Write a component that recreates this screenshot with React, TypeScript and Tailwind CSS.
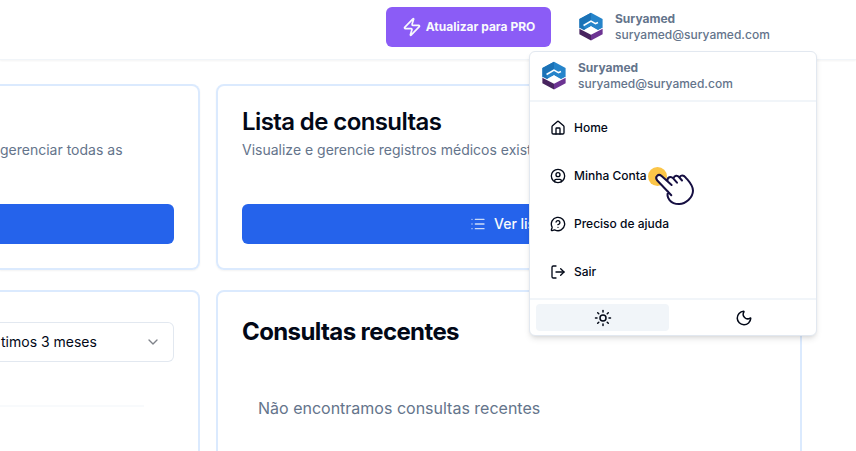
import React from "react";
import { Zap, House, LogOut, MessageCircleQuestionMark, Sun, Moon, List, ChevronDown } from "lucide-react";

function Logo() {
  return (
    <svg viewBox="0 0 26 30" className="h-[29px] w-[26px] shrink-0">
      <path d="M1 7.300 13 .8l12 6.500v9.200l-4.500 2.400L13 14.700 5 18.900l-4-2.200Z" fill="#2584ca" />
      <path d="M1 7.300 13 .8v7.200L5.500 12.500v3.300l2 1.900L5 18.900l-4-2.200Z" fill="#1b72b6" />
      <path d="m5.300 14 7.700-4.600 4.600 2.700 2.600-1.300" fill="none" stroke="#fff" strokeWidth="1.600" />
      <path d="m1 16.200 12 6.400 12-6.400v1.600l-12 6.400L1 17.800ZM13 14.700l6.500 4.200-6.500 3.900-6.500-3.900Z" fill="#fff" />
      <path d="M1 17.400 13 23.500v6L1 22.900Z" fill="#48245f" />
      <path d="m25 17.400-12 6.100v6l12-6.600Z" fill="#6c3392" />
    </svg>
  );
}

function Account({ className = "" }: { className?: string }) {
  return (
    <div className={`flex items-center gap-[11px] text-xs leading-4 text-[#64748b] ${className}`}>
      <div className="-mt-px flex"><Logo /></div>
      <div>
        <p className="font-bold">Suryamed</p>
        <p className="font-medium">suryamed@suryamed.com</p>
      </div>
    </div>
  );
}

function UserIcon() {
  return (
    <svg viewBox="0 0 24 24" className="size-4" fill="none" stroke="currentColor" strokeWidth="2" strokeLinecap="round" strokeLinejoin="round">
      <circle cx="12" cy="12" r="10" />
      <circle cx="12" cy="10" r="3" />
      <path d="M7 20.662V19a2 2 0 0 1 2-2h6a2 2 0 0 1 2 2v1.662" />
    </svg>
  );
}

const items = [
  { icon: <House size={16} />, label: "Home" },
  { icon: <UserIcon />, label: "Minha Conta" },
  { icon: <MessageCircleQuestionMark size={16} />, label: "Preciso de ajuda" },
  { icon: <LogOut size={16} />, label: "Sair" },
];

function Pointer() {
  return (
    <svg viewBox="0 0 50 44" className="absolute left-[117px] top-[112px] h-[44px] w-[50px]">
      <circle cx="10.500" cy="12.500" r="9.500" fill="#fbc548" />
      <path
        d="M22.800 26.500 10.300 17c-3-3.600 1-7.300 4.300-4.500l6 5c-.5-4 3.500-5 5.500-2.800 1-3.200 4.500-3 6.200-.8 1.500-3 5-2.300 6.700-.2 3.600 4.400 7.500 8 7.200 13.500-.3 7-7.300 12.800-14.300 12.800s-12-5-9.500-13Z"
        fill="#fff"
      />
      <path
        d="m24.300 31.300-14-14.800c-3-3.600 1-7.300 4.300-4.500l10 9M20.500 17c-.5-4 3.500-5 5.500-2.800l4 4.500M26.500 14.300c1-3.200 4-3 5.500-1.300l3 3.500M32.600 13.500c1-3 4.200-2.300 5.900-.2 3.600 4.400 7.700 8 7.500 13.500-.2 7-7.200 13.400-14.200 13.200-8 0-13.200-6.500-10.500-12.300"
        fill="none"
        stroke="#160f42"
        strokeWidth="2"
        strokeLinecap="round"
        strokeLinejoin="round"
      />
    </svg>
  );
}

function UserMenu() {
  return (
    <div className="absolute left-[529px] top-[51px] h-[285px] w-72 rounded-md border border-slate-200 bg-white text-[#020817] shadow-md">
      <Account className="h-12 pl-[11px]" />
      <div className="h-0.5 bg-slate-100" />
      <div className="pt-[2px]">
        {items.map(({ icon, label }) => (
          <div key={label} className="flex h-12 items-center gap-2 pl-5 text-xs font-medium">
            {icon}
            <span>{label}</span>
          </div>
        ))}
      </div>
      <div className="mt-[2px] h-0.5 bg-slate-100" />
      <div className="flex gap-2 px-1.5 pt-1">
        <div className="flex h-[27px] w-[133px] items-center justify-center rounded bg-slate-100"><Sun size={18} /></div>
        <div className="flex h-[27px] w-[133px] items-center justify-center rounded"><Moon size={18} /></div>
      </div>
      <Pointer />
    </div>
  );
}

export default function App() {
  return (
    <div className="relative h-[451px] w-[856px] overflow-hidden bg-white font-['Inter',sans-serif] text-[#020817]">
      <header className="flex h-[60px] border-b border-slate-100 pl-[386px] shadow-[0_1px_2px_rgba(0,0,0,0.05)]">
        <button className="mt-[7px] flex h-10 w-[165px] items-center justify-center gap-1 rounded-md bg-[#8b5cf6] text-xs font-bold text-slate-50">
          <Zap size={20} strokeWidth={2} />
          <span className="whitespace-nowrap">Atualizar para PRO</span>
        </button>
        <Account className="ml-[27px] h-[54px]" />
      </header>
      <main className="grid grid-cols-[200px_586px] gap-x-4 gap-y-5 pt-6">
        <section className="flex h-[186px] flex-col overflow-hidden rounded-r-lg border-2 border-l-0 border-blue-100 pr-6 shadow-[0_1px_2px_rgba(0,0,0,0.05)]">
          <p className="mt-[54px] whitespace-nowrap text-sm leading-5 text-[#64748b]">gerenciar todas as</p>
          <div className="mt-11 h-10 shrink-0 rounded-r-md bg-[#2563eb]" />
        </section>
        <section className="flex h-[186px] flex-col rounded-lg border-2 border-blue-100 px-6 pt-6 shadow-[0_1px_2px_rgba(0,0,0,0.05)]">
          <h2 className="text-2xl leading-6 font-semibold tracking-tight">Lista de consultas</h2>
          <p className="mt-1.5 text-sm leading-5 text-[#64748b]">Visualize e gerencie registros médicos existentes</p>
          <button className="mt-11 flex h-10 shrink-0 items-center justify-center gap-2 rounded-md bg-[#2563eb] text-sm font-medium text-slate-50">
            <List size={16} className="opacity-80" />
            Ver lista
          </button>
        </section>
        <section className="h-[220px] overflow-hidden rounded-tr-lg border-2 border-l-0 border-blue-100 pr-6">
          <div className="mt-[30px] flex h-10 items-center justify-between rounded-r-md border border-l-0 border-slate-200 pr-3 text-sm">
            <span className="ml-px">timos 3 meses</span>
            <ChevronDown size={16} className="opacity-50" />
          </div>
          <div className="mt-[43px] h-0.5 w-36 bg-slate-50" />
        </section>
        <section className="h-[220px] rounded-t-lg border-2 border-blue-100 px-6 pt-7">
          <h2 className="text-2xl leading-6 font-bold tracking-tight">Consultas recentes</h2>
          <p className="mt-[52px] pl-4 text-base leading-6 text-[#64748b]">Não encontramos consultas recentes</p>
        </section>
      </main>
      <UserMenu />
    </div>
  );
}
